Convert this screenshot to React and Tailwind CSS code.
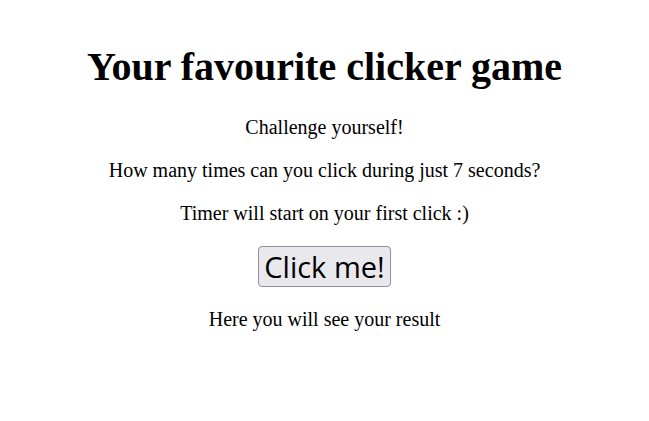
export default function App() {
  return (
    <div className="flex flex-col items-center bg-white text-black font-['Liberation_Serif','Times_New_Roman',serif] min-h-[421px]">
      <h1 className="mt-[44px] text-[40px] leading-[46px] font-bold">Your favourite clicker game</h1>
      <div className="mt-[26px] flex flex-col items-center gap-[20px] text-[20px] leading-[23px]">
        <p>Challenge yourself!</p>
        <p>How many times can you click during just 7 seconds?</p>
        <p>Timer will start on your first click :)</p>
      </div>
      <button className="mt-[21px] h-[41px] px-[5px] rounded-[4px] border border-[#8f8f9d] bg-[#e9e9ed] text-[29px] leading-[38px] font-['Open_Sans','Noto_Sans',sans-serif]">
        Click me!
      </button>
      <p className="mt-[21px] text-[20px] leading-[23px]">Here you will see your result</p>
    </div>
  );
}
